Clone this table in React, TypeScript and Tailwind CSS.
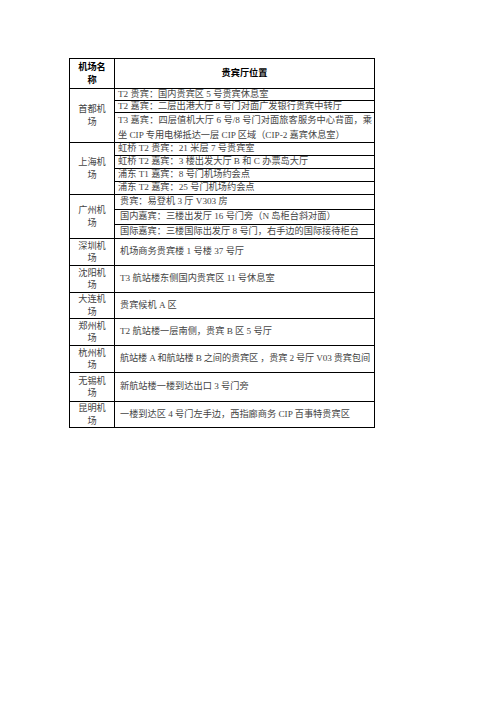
import React from "react";

type Item = { h: string; text: React.ReactNode };
type Row = { city: string; pad: string; items: Item[] };

const rows: Row[] = [
  {
    city: "首都机场",
    pad: "pl-[3px]",
    items: [
      { h: "h-[12px]", text: "T2 贵宾：国内贵宾区 5 号贵宾休息室" },
      { h: "h-[12px]", text: "T2 嘉宾：二层出港大厅 8 号门对面广发银行贵宾中转厅" },
      {
        h: "h-[30px]",
        text: (
          <div className="w-full pr-[2px] leading-[15px]">
            <div className="text-justify [text-align-last:justify]">
              T3 嘉宾：四层值机大厅 6 号/8 号门对面旅客服务中心背面，乘
            </div>
            <div>坐 CIP 专用电梯抵达一层 CIP 区域（CIP-2 嘉宾休息室）</div>
          </div>
        ),
      },
    ],
  },
  {
    city: "上海机场",
    pad: "pl-[3px]",
    items: [
      { h: "h-[13px]", text: "虹桥 T2 贵宾：21 米层 7 号贵宾室" },
      { h: "h-[13px]", text: "虹桥 T2 嘉宾：3 楼出发大厅 B 和 C 办票岛大厅" },
      { h: "h-[13px]", text: "浦东 T1 嘉宾：8 号门机场约会点" },
      { h: "h-[13px]", text: "浦东 T2 嘉宾：25 号门机场约会点" },
    ],
  },
  {
    city: "广州机场",
    pad: "pl-[5px]",
    items: [
      { h: "h-[15px]", text: "贵宾：易登机 3 厅 V303 房" },
      { h: "h-[15px]", text: "国内嘉宾：三楼出发厅 16 号门旁（N 岛柜台斜对面）" },
      { h: "h-[14px]", text: "国际嘉宾：三楼国际出发厅 8 号门，右手边的国际接待柜台" },
    ],
  },
  { city: "深圳机场", pad: "pl-[5px]", items: [{ h: "h-[27px]", text: "机场商务贵宾楼 1 号楼 37 号厅" }] },
  { city: "沈阳机场", pad: "pl-[5px]", items: [{ h: "h-[27px]", text: "T3 航站楼东侧国内贵宾区 11 号休息室" }] },
  { city: "大连机场", pad: "pl-[5px]", items: [{ h: "h-[26px]", text: "贵宾候机 A 区" }] },
  { city: "郑州机场", pad: "pl-[5px]", items: [{ h: "h-[27px]", text: "T2 航站楼一层南侧，贵宾 B 区 5 号厅" }] },
  {
    city: "杭州机场",
    pad: "pl-[5px]",
    items: [
      {
        h: "h-[27px]",
        text: <span className="tracking-[-0.15px]">航站楼 A 和航站楼 B 之间的贵宾区 ，贵宾 2 号厅 V03 贵宾包间</span>,
      },
    ],
  },
  { city: "无锡机场", pad: "pl-[5px]", items: [{ h: "h-[29px]", text: "新航站楼一楼到达出口 3 号门旁" }] },
  { city: "昆明机场", pad: "pl-[5px]", items: [{ h: "h-[26px]", text: "一楼到达区 4 号门左手边，西指廊商务 CIP 百事特贵宾区" }] },
];

const App = () => {
  return (
    <div className="min-h-[702px] w-[496px] bg-white pl-[69px] pt-[58px] font-['Liberation_Serif','Noto_Sans_CJK_SC',serif] text-[9.2px] text-[#444]">
      <div className="w-[306px] border-l border-t border-black">
        {/* header */}
        <div className="flex h-[30px]">
          <div className="flex w-[45px] shrink-0 items-center justify-center border-b border-r border-black text-center font-bold leading-[13px] text-black">
            机场名
            <br />
            称
          </div>
          <div className="flex w-[260px] shrink-0 items-center justify-center border-b border-r border-black font-bold text-black">
            贵宾厅位置
          </div>
        </div>

        {rows.map((row) => (
          <div key={row.city} className="flex">
            <div className="flex w-[45px] shrink-0 items-center justify-center overflow-hidden border-b border-r border-black text-center leading-[12.5px]">
              <span>
                {row.city.slice(0, 3)}
                <br />
                {row.city.slice(3)}
              </span>
            </div>
            <div className="flex w-[260px] shrink-0 flex-col">
              {row.items.map((item, i) => (
                <div
                  key={i}
                  className={`flex min-w-0 items-center overflow-hidden whitespace-nowrap border-b border-r border-black leading-none ${item.h} ${row.pad}`}
                >
                  {item.text}
                </div>
              ))}
            </div>
          </div>
        ))}
      </div>
    </div>
  );
};

export default App;
